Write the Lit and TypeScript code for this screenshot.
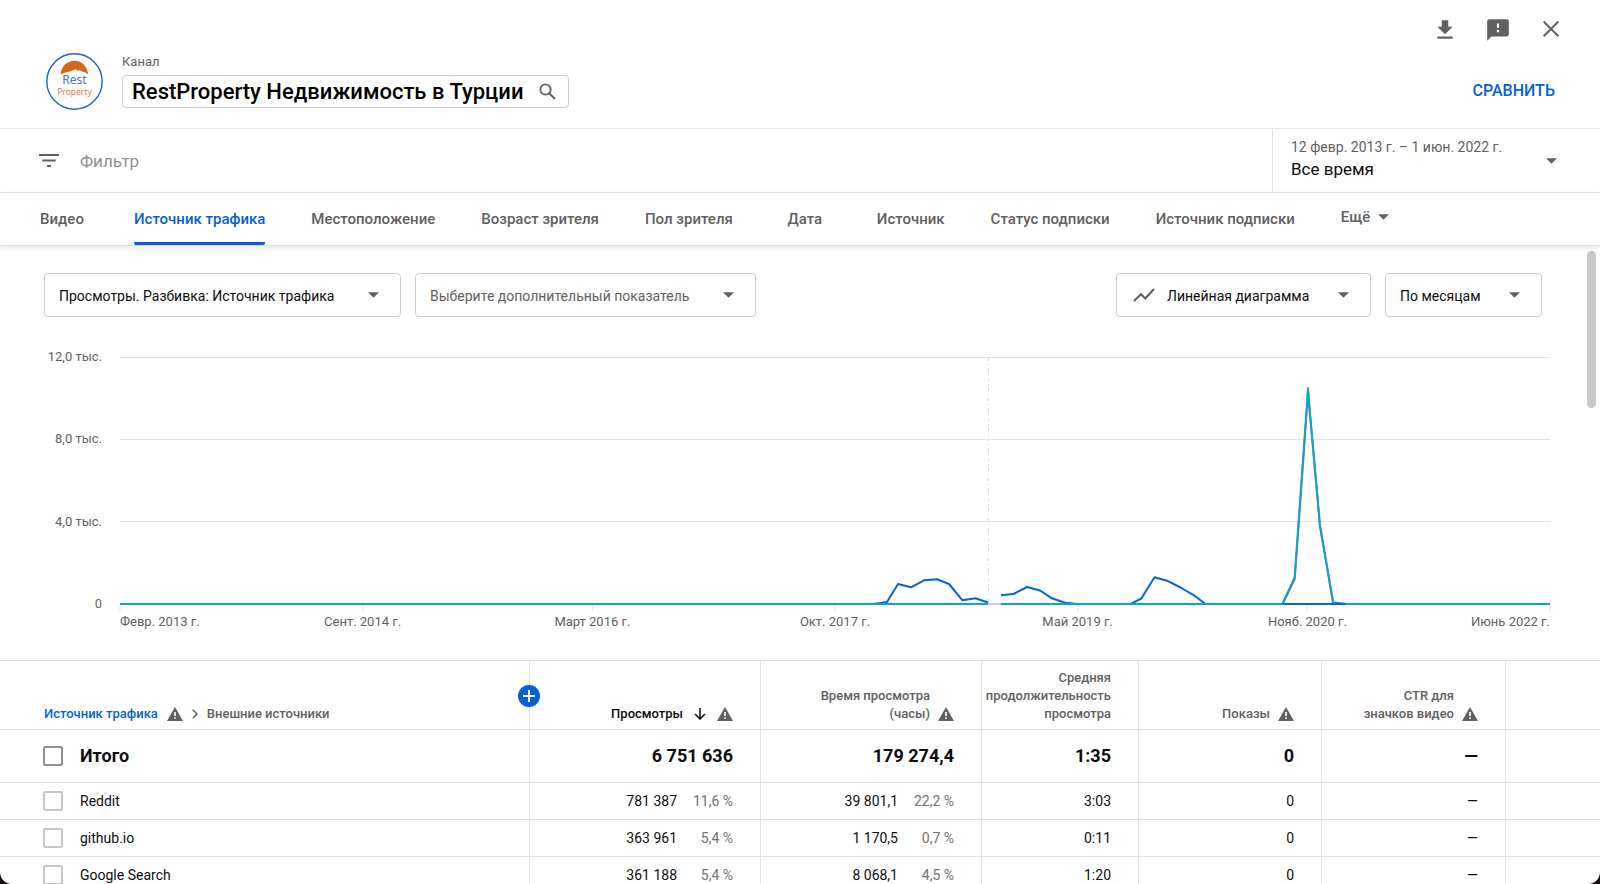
import { LitElement, html, svg, css, nothing } from "lit";
import { customElement, property, state } from "lit/decorators.js";
import { classMap } from "lit/directives/class-map.js";

const NBSP = "\u00a0";

interface Cell {
  value: string;
  share?: string;
}

interface SourceRow {
  name: string;
  cells: Cell[];
}

const TABS = [
  "Видео",
  "Источник трафика",
  "Местоположение",
  "Возраст зрителя",
  "Пол зрителя",
  "Дата",
  "Источник",
  "Статус подписки",
  "Источник подписки",
];

const TOTALS = [`6${NBSP}751${NBSP}636`, `179${NBSP}274,4`, "1:35", "0", "—"];

const ROWS: SourceRow[] = [
  {
    name: "Reddit",
    cells: [
      { value: `781${NBSP}387`, share: `11,6${NBSP}%` },
      { value: `39${NBSP}801,1`, share: `22,2${NBSP}%` },
      { value: "3:03" },
      { value: "0" },
      { value: "—" },
    ],
  },
  {
    name: "github.io",
    cells: [
      { value: `363${NBSP}961`, share: `5,4${NBSP}%` },
      { value: `1${NBSP}170,5`, share: `0,7${NBSP}%` },
      { value: "0:11" },
      { value: "0" },
      { value: "—" },
    ],
  },
  {
    name: "Google Search",
    cells: [
      { value: `361${NBSP}188`, share: `5,4${NBSP}%` },
      { value: `8${NBSP}068,1`, share: `4,5${NBSP}%` },
      { value: "1:20" },
      { value: "0" },
      { value: "—" },
    ],
  },
];

const warningIcon = html`<svg class="warning" viewBox="0 0 16 14" role="img" aria-label="Внимание">
  <path d="M8 0 16 14H0Z" fill="#606060" />
  <path d="M7.2 5h1.6v4H7.2zM7.2 10.2h1.6v1.6H7.2z" fill="#fff" />
</svg>`;

const caretIcon = html`<svg class="caret" viewBox="0 0 12 6" aria-hidden="true">
  <path d="M0 0H12L6 6Z" fill="currentColor" />
</svg>`;

/** Drop-down box with a caret and an optional leading icon. */
@customElement("metric-select")
export class MetricSelect extends LitElement {
  @property() label = "";
  @property() value = "";
  @property({ type: Boolean }) muted = false;
  @property({ type: Boolean }) chart = false;
  @property({ type: Boolean }) compact = false;

  static styles = css`
    :host {
      display: block;
    }
    .box {
      display: grid;
      align-items: center;
      color: #606060;
    }
    .field,
    .caret,
    .trend {
      grid-area: 1 / 1;
    }
    .field {
      appearance: none;
      box-sizing: border-box;
      height: 44px;
      width: 100%;
      margin: 0;
      padding: 2px 65px 0 14px;
      border: 1px solid #ccc;
      border-radius: 4px;
      background: #fff;
      color: #0d0d0d;
      font: 400 14px/24px Roboto, "Liberation Sans", sans-serif;
    }
    .field.muted {
      color: #606060;
    }
    .field.compact {
      padding-right: 60px;
    }
    .field.chart {
      padding-left: 50px;
    }
    .caret {
      justify-self: end;
      width: 11px;
      height: 6px;
      margin-right: 22px;
      pointer-events: none;
    }
    .trend {
      width: 22px;
      height: 14px;
      margin-left: 17px;
      pointer-events: none;
    }
  `;

  render() {
    return html`<div class="box">
      <select
        class=${classMap({
          field: true,
          muted: this.muted,
          chart: this.chart,
          compact: this.compact,
        })}
        aria-label=${this.label}
      >
        <option>${this.value}</option>
      </select>
      ${this.chart
        ? html`<svg class="trend" viewBox="0 0 22 14" aria-hidden="true">
            <path
              d="M1 13 8 6.2 12.3 10.4 21 1"
              fill="none"
              stroke="currentColor"
              stroke-width="2.1"
            />
          </svg>`
        : nothing}
      ${caretIcon}
    </div>`;
  }
}

/** Monthly views, one line for each external source. */
@customElement("traffic-chart")
export class TrafficChart extends LitElement {
  private yLabels = ["12,0 тыс.", "8,0 тыс.", "4,0 тыс.", "0"];
  private xLabels = [
    { month: 0, text: "Февр. 2013 г." },
    { month: 19, text: "Сент. 2014 г." },
    { month: 37, text: "Март 2016 г." },
    { month: 56, text: "Окт. 2017 г." },
    { month: 75, text: "Май 2019 г." },
    { month: 93, text: "Нояб. 2020 г." },
    { month: 112, text: "Июнь 2022 г." },
  ];

  static styles = css`
    :host {
      display: block;
      font: 400 13px/18px Roboto, "Liberation Sans", sans-serif;
      color: #606060;
    }
    .chart {
      display: grid;
      grid-template-columns: 102px 1fr;
      column-gap: 18px;
      row-gap: 9px;
    }
    .y-axis {
      display: flex;
      flex-direction: column;
      justify-content: space-between;
      align-items: flex-end;
      margin: -9px 0;
    }
    .plot {
      display: block;
      width: 100%;
      height: 247px;
      overflow: visible;
    }
    .plot * {
      vector-effect: non-scaling-stroke;
    }
    .grid {
      stroke: #e3e3e3;
    }
    .marker {
      stroke: #d8d8d8;
      stroke-dasharray: 3 3 1 3;
    }
    .line {
      fill: none;
      stroke-width: 2;
      stroke-linejoin: round;
    }
    .blue {
      stroke: #0562d8;
    }
    .teal {
      stroke: #0aa5c8;
    }
    .green {
      stroke: #5fae1f;
    }
    .pink {
      stroke: #c75aa8;
    }
    .gap {
      stroke: #ccc;
      stroke-width: 2;
    }
    .x-axis {
      grid-column: 2;
      display: grid;
      grid-template-columns: repeat(112, 1fr);
    }
    .tick {
      grid-row: 1;
      text-align: center;
      white-space: nowrap;
    }
    .tick.first {
      text-align: left;
    }
    .tick.last {
      text-align: right;
    }
  `;

  private column(month: number) {
    const start = Math.min(Math.max(month - 4, 0), 104) + 1;
    return `grid-column: ${start} / span 8`;
  }

  render() {
    return html`<div class="chart">
      <div class="y-axis">${this.yLabels.map((t) => html`<span>${t}</span>`)}</div>
      <svg class="plot" viewBox="0 0 1430 247" preserveAspectRatio="none" role="img" aria-label="Просмотры по месяцам">
        ${[0.5, 82.5, 164.5].map((y) => svg`<path class="grid" d="M0 ${y}H1430" />`)}
        ${this.xLabels.map(
          ({ month }) => svg`<path class="grid" d="M${(month * 1430) / 112} 248v6" />`,
        )}
        <path class="marker" d="M868.5 1V246" />
        <path class="gap" d="M868 247H881" />
        <path class="line blue" d="M754 247 767 245 778 227 791 230.3 804 223.3 817 222.3 829 227 842.5 243.3 855.5 241.3 868 245.5" />
        <path class="line blue" d="M881 238.3 893.6 237 907 230 920 233.5 932 241.3 945 245.7 957 247" />
        <path class="line blue" d="M1010.5 247 1021.5 241.3 1034.5 220.3 1047 223.7 1060.5 230.5 1074 238.3 1085.5 247" />
        <path class="line pink" d="M1162.5 247 1174.8 222 1188 36 1200 169 1213 246" />
        <path class="line green" d="M1187.5 40 1188 31 1188.5 40" />
        <path class="line teal" d="M0 247H868M881 247H1162.5L1174.6 220.5 1188 33 1200 169 1213.3 245.3 1226 247H1430" />
        <path class="line blue" d="M1163 247H1226" />
      </svg>
      <div class="x-axis">
        ${this.xLabels.map(
          ({ month, text }) => html`<span
            class=${classMap({ tick: true, first: month === 0, last: month === 112 })}
            style=${this.column(month)}
            >${text}</span
          >`,
        )}
      </div>
    </div>`;
  }
}

/** Breakdown of views by external source. */
@customElement("source-table")
export class SourceTable extends LitElement {
  static styles = css`
    :host {
      display: block;
    }
    table {
      width: 100%;
      table-layout: fixed;
      border-collapse: separate;
      border-spacing: 0;
      font: 400 14px/20px Roboto, "Liberation Sans", sans-serif;
      color: #0d0d0d;
    }
    .c-views {
      width: 231px;
    }
    .c-time {
      width: 221px;
    }
    .c-duration {
      width: 157px;
    }
    .c-shows {
      width: 183px;
    }
    .c-ctr {
      width: 184px;
    }
    .c-rest {
      width: 95px;
    }
    th,
    td {
      box-sizing: border-box;
      padding: 0 27px 0 0;
      border-bottom: 1px solid #e3e3e3;
      border-left: 1px solid #e3e3e3;
      text-align: right;
      white-space: nowrap;
      font-weight: 400;
    }
    tr > :first-child {
      border-left: 0;
      padding-left: 43px;
      text-align: left;
    }
    thead th {
      position: relative;
      height: 70px;
      padding-bottom: 6px;
      border-top: 1px solid #e3e3e3;
      vertical-align: bottom;
      font-size: 13px;
      line-height: 18px;
      font-weight: 500;
      color: #606060;
    }
    .head {
      display: flex;
      align-items: flex-end;
      justify-content: flex-end;
      gap: 8px;
    }
    .head.sorted {
      color: #0d0d0d;
      gap: 11px;
    }
    .crumbs {
      display: flex;
      align-items: flex-end;
      gap: 9px;
      padding-left: 1px;
    }
    .crumbs a {
      color: #065fd4;
      text-decoration: none;
    }
    .warning {
      flex: none;
      width: 16px;
      height: 14px;
      margin-bottom: 2px;
    }
    .chevron {
      width: 6px;
      height: 10px;
      margin-bottom: 4px;
    }
    .down {
      width: 12px;
      height: 12px;
      margin-bottom: 3px;
    }
    .add {
      position: absolute;
      z-index: 1;
      top: 24px;
      right: -11px;
      display: grid;
      place-items: center;
      width: 22px;
      height: 22px;
      padding: 0;
      border: 0;
      border-radius: 50%;
      background: #065fd4;
    }
    .add svg {
      width: 12px;
      height: 12px;
    }
    .total td,
    .total th {
      height: 53px;
      font-size: 18px;
      font-weight: 700;
    }
    .row td,
    .row th {
      height: 37px;
    }
    .pick {
      display: flex;
      align-items: center;
      gap: 17px;
    }
    .box {
      appearance: none;
      box-sizing: border-box;
      width: 20px;
      height: 20px;
      margin: 0;
      border: 2px solid #c6c6c6;
      border-radius: 2px;
      background: #fff;
    }
    .total .box {
      border-color: #909090;
    }
    .share {
      display: inline-block;
      width: 56px;
      color: #707070;
    }
  `;

  render() {
    return html`<table>
      <colgroup>
        <col />
        <col class="c-views" />
        <col class="c-time" />
        <col class="c-duration" />
        <col class="c-shows" />
        <col class="c-ctr" />
        <col class="c-rest" />
      </colgroup>
      <thead>
        <tr>
          <th scope="col">
            <div class="crumbs">
              <a href="#">Источник трафика</a>
              ${warningIcon}
              <svg class="chevron" viewBox="0 0 6 10" aria-hidden="true">
                <path d="M.8.8 5 5 .8 9.2" fill="none" stroke="#606060" stroke-width="1.5" />
              </svg>
              <span>Внешние источники</span>
            </div>
            <button class="add" aria-label="Добавить показатель">
              <svg viewBox="0 0 12 12" aria-hidden="true">
                <path d="M6 0V12M0 6H12" stroke="#fff" stroke-width="2" />
              </svg>
            </button>
          </th>
          <th scope="col" aria-sort="descending">
            <div class="head sorted">
              <span>Просмотры</span>
              <svg class="down" viewBox="0 0 12 12" aria-hidden="true">
                <path d="M6 0V11M1 6 6 11 11 6" fill="none" stroke="#0d0d0d" stroke-width="1.5" />
              </svg>
              ${warningIcon}
            </div>
          </th>
          <th scope="col">
            <div class="head"><span>Время просмотра<br />(часы)</span>${warningIcon}</div>
          </th>
          <th scope="col">
            <div class="head"><span>Средняя<br />продолжительность<br />просмотра</span></div>
          </th>
          <th scope="col">
            <div class="head"><span>Показы</span>${warningIcon}</div>
          </th>
          <th scope="col">
            <div class="head"><span>CTR для<br />значков видео</span>${warningIcon}</div>
          </th>
          <th></th>
        </tr>
      </thead>
      <tbody>
        <tr class="total">
          <th scope="row">
            <label class="pick"><input class="box" type="checkbox" />Итого</label>
          </th>
          ${TOTALS.map((t) => html`<td>${t}</td>`)}
          <td></td>
        </tr>
        ${ROWS.map(
          (row) => html`<tr class="row">
            <th scope="row">
              <label class="pick"><input class="box" type="checkbox" />${row.name}</label>
            </th>
            ${row.cells.map(
              (c) => html`<td>${c.value}${c.share ? html`<span class="share">${c.share}</span>` : nothing}</td>`,
            )}
            <td></td>
          </tr>`,
        )}
      </tbody>
    </table>`;
  }
}

@customElement("app-root")
export class AppRoot extends LitElement {
  @state() private activeTab = 1;

  static styles = css`
    :host {
      display: block;
      height: 100vh;
      background: #0d0608;
      font: 400 15px/20px Roboto, "Liberation Sans", sans-serif;
      color: #0d0d0d;
    }
    button,
    input,
    select {
      margin: 0;
      padding: 0;
      border: 0;
      background: none;
      color: inherit;
      font: inherit;
    }
    .window {
      display: flex;
      flex-direction: column;
      height: 100%;
      overflow: hidden;
      border-radius: 0 0 12px 12px;
      background: #fff;
    }
    .header {
      padding: 17px 0 18px;
      border-bottom: 1px solid #e8e8e8;
    }
    .actions {
      display: flex;
      justify-content: flex-end;
      gap: 27px;
      padding-right: 36px;
      color: #606060;
    }
    .icon {
      display: block;
      width: 26px;
      height: 26px;
    }
    .identity {
      display: flex;
      align-items: flex-start;
      gap: 19px;
      margin-top: 10px;
      padding: 0 45px 0 46px;
    }
    .avatar {
      display: block;
      width: 57px;
      height: 57px;
    }
    .channel {
      display: flex;
      flex-direction: column;
      align-items: flex-start;
      gap: 4px;
      margin-right: auto;
    }
    .channel-label {
      font-size: 13px;
      line-height: 18px;
      color: #606060;
    }
    .channel-box {
      display: flex;
      align-items: center;
      gap: 16px;
      box-sizing: border-box;
      height: 33px;
      padding: 0 12px 0 9px;
      border: 1px solid #ccc;
      border-radius: 4px;
      font-size: 22px;
      font-weight: 500;
      color: #000;
    }
    .search {
      width: 17px;
      height: 17px;
    }
    .compare {
      align-self: flex-end;
      padding-bottom: 9px;
      font-size: 16px;
      font-weight: 500;
      color: #065fd4;
    }
    .filters {
      display: flex;
      height: 63px;
      border-bottom: 1px solid #e3e3e3;
    }
    .filter {
      flex: 1;
      display: flex;
      align-items: center;
      gap: 21px;
      padding-left: 39px;
    }
    .filter-icon {
      width: 20px;
      height: 13px;
    }
    .filter-input {
      flex: 1;
      font-size: 17px;
    }
    .filter-input::placeholder {
      color: #909090;
    }
    .period {
      display: flex;
      align-items: center;
      box-sizing: border-box;
      width: 328px;
      padding: 0 43px 0 18px;
      border-left: 1px solid #e3e3e3;
    }
    .period-text {
      flex: 1;
      display: flex;
      flex-direction: column;
      gap: 2px;
      padding-bottom: 5px;
    }
    .period-label {
      font-size: 14px;
      color: #606060;
    }
    .period-select {
      appearance: none;
      font-size: 17px;
      line-height: 20px;
    }
    .caret {
      width: 11px;
      height: 6px;
      color: #606060;
    }
    .tabs {
      z-index: 1;
      display: flex;
      height: 52px;
      padding-left: 13px;
      border-bottom: 1px solid #e0e0e0;
      box-shadow: 0 2px 6px rgba(0, 0, 0, 0.1);
    }
    .tab {
      display: flex;
      justify-content: center;
      box-sizing: border-box;
      min-width: 98px;
      padding: 0 23px;
      font-size: 15px;
      font-weight: 500;
      color: #606060;
      white-space: nowrap;
    }
    .tab-text {
      box-sizing: border-box;
      height: 52px;
      padding-top: 16px;
      border-bottom: 3px solid transparent;
    }
    .tab.active {
      color: #065fd4;
    }
    .tab.active .tab-text {
      background: linear-gradient(#065fd4, #065fd4) bottom / 100% 3px no-repeat;
      background-origin: border-box;
      border-radius: 2px;
    }
    .more {
      display: flex;
      align-items: center;
      gap: 8px;
      padding: 0 23px 4px;
      font-weight: 500;
      color: #606060;
    }
    .content {
      position: relative;
      flex: 1;
      min-height: 0;
      overflow: hidden;
    }
    .toolbar {
      display: flex;
      gap: 14px;
      padding: 27px 58px 0 44px;
    }
    .spacer {
      flex: 1;
    }
    .chart {
      padding: 40px 50px 29px 0;
    }
    .thumb {
      position: absolute;
      top: 5px;
      right: 4px;
      width: 9px;
      height: 157px;
      border-radius: 5px;
      background: #c8c8c8;
    }
  `;

  private renderHeader() {
    return html`<header class="header">
      <div class="actions">
        <button aria-label="Скачать">
          <svg class="icon" viewBox="0 0 24 24" aria-hidden="true">
            <path d="M19 9h-4V3H9v6H5l7 7 7-7zM5 18v2h14v-2H5z" fill="currentColor" />
          </svg>
        </button>
        <button aria-label="Отправить отзыв">
          <svg class="icon" viewBox="0 0 24 24" aria-hidden="true">
            <path
              d="M20 2H4c-1.100 0-2 .9-2 2v18l4-4h14c1.100 0 2-.9 2-2V4c0-1.100-.9-2-2-2zm-7 12h-2v-2h2v2zm0-4h-2V6h2v4z"
              fill="currentColor"
            />
          </svg>
        </button>
        <button aria-label="Закрыть">
          <svg class="icon" viewBox="0 0 24 24" aria-hidden="true">
            <path d="M5.200 4.200 18.800 17.800M18.800 4.200 5.200 17.800" stroke="currentColor" stroke-width="1.800" />
          </svg>
        </button>
      </div>
      <div class="identity">
        <svg class="avatar" viewBox="0 0 57 57" role="img" aria-label="Rest Property">
          <circle cx="28.500" cy="28.500" r="27.700" fill="#fff" stroke="#1f63bd" stroke-width="1.400" />
          <path
            d="M14.500 21.500C15.500 12.500 21.500 7.800 28.500 7.800S41 12.500 42.200 21.500L39 19.300 36.500 18.800 34 17.300 32 17.800 29.500 16.300 24 18.500 20 19.300Z"
            fill="#d4681c"
          />
          <text x="28.500" y="31" text-anchor="middle" font-family="Noto Sans, sans-serif" font-size="12" fill="#4a76b8">Rest</text>
          <text x="28.500" y="42" text-anchor="middle" font-family="Noto Sans, sans-serif" font-size="8.500" fill="#dd7d4a">Property</text>
        </svg>
        <div class="channel">
          <span class="channel-label" id="channel-label">Канал</span>
          <button class="channel-box" aria-describedby="channel-label">
            RestProperty Недвижимость в Турции
            <svg class="search" viewBox="0 0 17 17" aria-hidden="true">
              <circle cx="6.500" cy="6.500" r="5.200" fill="none" stroke="#606060" stroke-width="1.800" />
              <path d="M10.300 10.300 16 16" stroke="#606060" stroke-width="2" />
            </svg>
          </button>
        </div>
        <button class="compare">СРАВНИТЬ</button>
      </div>
    </header>`;
  }

  private renderFilters() {
    return html`<div class="filters">
      <label class="filter">
        <svg class="filter-icon" viewBox="0 0 20 13" aria-hidden="true">
          <path d="M0 1H20M3.300 6.500H16.700M8 12H12" stroke="#606060" stroke-width="2" />
        </svg>
        <input class="filter-input" type="text" placeholder="Фильтр" aria-label="Фильтр" />
      </label>
      <div class="period">
        <div class="period-text">
          <label class="period-label" for="period">12 февр. 2013 г. – 1 июн. 2022 г.</label>
          <select class="period-select" id="period">
            <option>Все время</option>
          </select>
        </div>
        ${caretIcon}
      </div>
    </div>`;
  }

  private renderTabs() {
    return html`<nav class="tabs" role="tablist">
      ${TABS.map(
        (name, i) => html`<button
          class=${classMap({ tab: true, active: i === this.activeTab })}
          role="tab"
          aria-selected=${i === this.activeTab ? "true" : "false"}
          @click=${() => (this.activeTab = i)}
        >
          <span class="tab-text">${name}</span>
        </button>`,
      )}
      <button class="more" aria-haspopup="menu">Ещё ${caretIcon}</button>
    </nav>`;
  }

  render() {
    return html`<div class="window">
      ${this.renderHeader()} ${this.renderFilters()} ${this.renderTabs()}
      <main class="content">
        <div class="toolbar">
          <metric-select label="Показатель" value="Просмотры. Разбивка: Источник трафика"></metric-select>
          <metric-select
            label="Дополнительный показатель"
            value="Выберите дополнительный показатель"
            muted
          ></metric-select>
          <div class="spacer"></div>
          <metric-select label="Вид диаграммы" value="Линейная диаграмма" chart compact></metric-select>
          <metric-select label="Период группировки" value="По месяцам" compact></metric-select>
        </div>
        <traffic-chart class="chart"></traffic-chart>
        <source-table></source-table>
        <div class="thumb"></div>
      </main>
    </div>`;
  }
}
